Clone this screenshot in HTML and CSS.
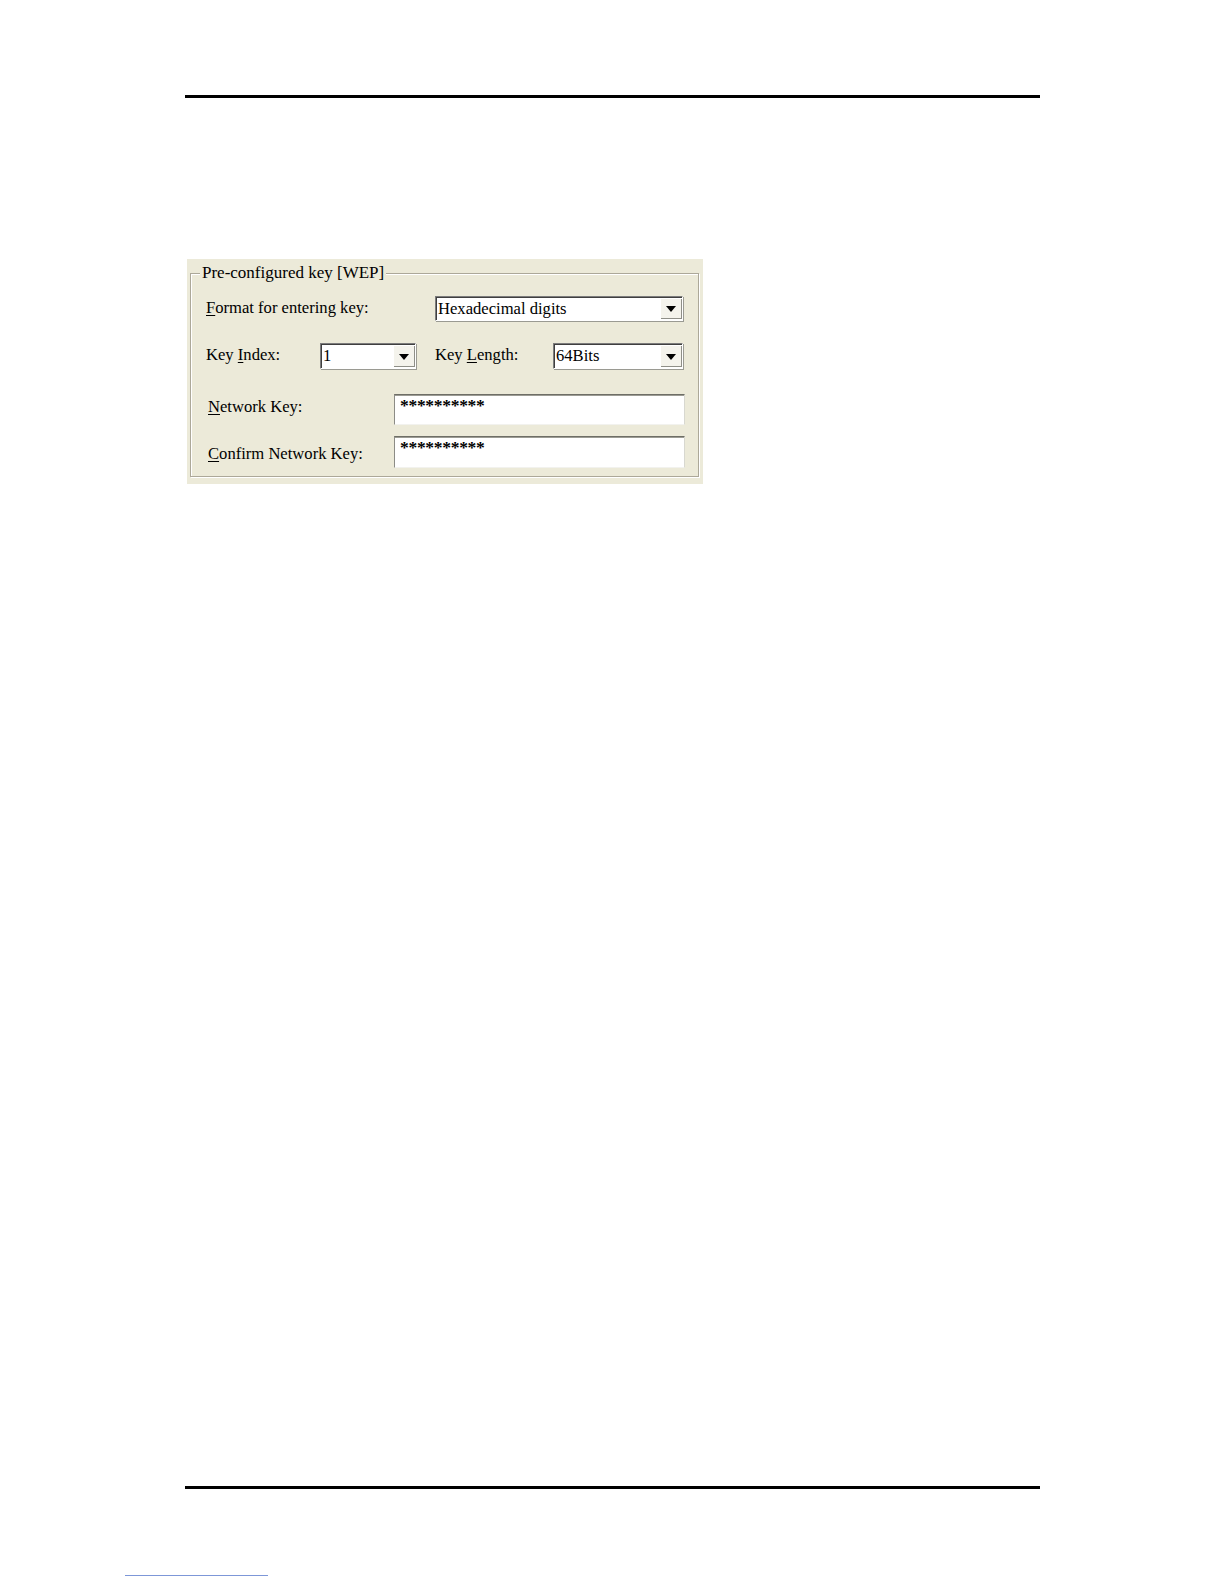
FILE: index.html
```html
<!DOCTYPE html>
<html>
<head>
<meta charset="utf-8">
<title>Pre-configured key [WEP]</title>
<link rel="stylesheet" href="styles.css">
</head>
<body>
<div class="page">
  <div class="rule"></div>
  <div class="panel">
    <fieldset class="group">
      <legend class="group-title">Pre-configured key [WEP]</legend>
      <div class="row row-format">
        <span class="lbl lbl-format"><u>F</u>ormat for entering key:</span>
        <div class="combo combo-format">
          <span class="combo-value">Hexadecimal digits</span>
          <span class="combo-btn"><span class="arrow"></span></span>
        </div>
      </div>
      <div class="row row-index">
        <span class="lbl lbl-index">Key <u>I</u>ndex:</span>
        <div class="combo combo-index">
          <span class="combo-value">1</span>
          <span class="combo-btn"><span class="arrow"></span></span>
        </div>
        <span class="lbl lbl-length">Key <u>L</u>ength:</span>
        <div class="combo combo-length">
          <span class="combo-value">64Bits</span>
          <span class="combo-btn"><span class="arrow"></span></span>
        </div>
      </div>
      <div class="row row-key">
        <span class="lbl lbl-key lbl-network"><u>N</u>etwork Key:</span>
        <div class="textbox"><span class="secret">**********</span></div>
      </div>
      <div class="row row-confirm">
        <span class="lbl lbl-key"><u>C</u>onfirm Network Key:</span>
        <div class="textbox"><span class="secret">**********</span></div>
      </div>
    </fieldset>
  </div>
  <div class="rule rule-bottom"></div>
  <div class="link-line"></div>
</div>
</body>
</html>
```
FILE: styles.css
```css
html, body {
  margin: 0;
  padding: 0;
  background: #ffffff;
}

body {
  font-family: "Liberation Serif", "Times New Roman", serif;
  color: #000000;
}

.page {
  width: 855px;
  margin-left: 185px;
  padding-top: 95px;
}

.rule {
  height: 3px;
  background: #000000;
}

.panel {
  box-sizing: border-box;
  width: 516px;
  margin-top: 161px;
  margin-left: 2px;
  padding: 4px 4px 7px 3px;
  background: #ecead9;
}

.group {
  margin: 0;
  padding: 13px 8px 8px 15px;
  border: 1px solid #aca899;
  box-shadow: inset 1px 1px 0 #ffffff, 1px 1px 0 #ffffff;
  min-width: 0;
}

.group-title {
  font-size: 17px;
  line-height: 20px;
  padding: 0 2px;
  margin-left: -6px;
  background: #ecead9;
}

.row {
  display: flex;
  align-items: center;
  font-size: 16.6px;
  line-height: 20px;
}

.row-format {
  height: 25px;
  margin-bottom: 22px;
}

.row-index {
  height: 26px;
  margin-bottom: 25px;
}

.row-key {
  height: 31px;
  margin-bottom: 11px;
}

.row-confirm {
  height: 32px;
}

.lbl {
  flex: none;
  white-space: nowrap;
}

.lbl u {
  text-decoration-thickness: 1px;
  text-underline-offset: 2px;
}

.lbl-format {
  width: 229px;
  padding-bottom: 1px;
}

.lbl-index {
  width: 114px;
  padding-bottom: 2px;
}

.lbl-length {
  width: 118px;
  margin-left: 19px;
  padding-bottom: 2px;
}

.lbl-key {
  box-sizing: border-box;
  width: 188px;
  padding-left: 2px;
  padding-top: 4px;
}

.lbl-network {
  padding-top: 0;
  padding-bottom: 5px;
}

.combo {
  box-sizing: border-box;
  display: flex;
  align-items: stretch;
  height: 100%;
  background: #ffffff;
  border: 1px solid;
  border-color: #7c7c7c #ffffff #ffffff #7c7c7c;
  box-shadow: inset 1px 1px 0 #3f3f3f, 1px 1px 0 #9a9a92;
}

.combo-format {
  width: 248px;
}

.combo-index {
  width: 96px;
}

.combo-length {
  width: 130px;
}

.combo-value {
  flex: 1;
  padding-left: 2px;
  padding-top: 2px;
  white-space: nowrap;
  overflow: hidden;
  font-size: 16.6px;
}

.combo-btn {
  box-sizing: border-box;
  flex: none;
  width: 21px;
  margin: 2px 0 1px 0;
  display: flex;
  align-items: center;
  justify-content: center;
  background: #f4f3ec;
  border-right: 1px solid #8f8f88;
  border-bottom: 1px solid #8f8f88;
}

.arrow {
  width: 0;
  height: 0;
  border-top: 6px solid #000000;
  border-left: 5px solid transparent;
  border-right: 5px solid transparent;
  margin-top: 1px;
}

.textbox {
  box-sizing: border-box;
  width: 291px;
  height: 100%;
  background: #ffffff;
  border: 1px solid;
  border-color: #6e6e66 #d8d8d0 #f2f2ee #8c8c86;
  box-shadow: inset 0 1px 0 #9c9c94;
  padding-left: 5px;
}

.secret {
  display: block;
  font-weight: bold;
  font-size: 17.5px;
  line-height: 18px;
  letter-spacing: -0.3px;
  padding-top: 1px;
}

.rule-bottom {
  margin-top: 1002px;
}

.link-line {
  width: 143px;
  height: 1px;
  margin-left: -60px;
  margin-top: 86px;
  background: #7d97d8;
}
```
